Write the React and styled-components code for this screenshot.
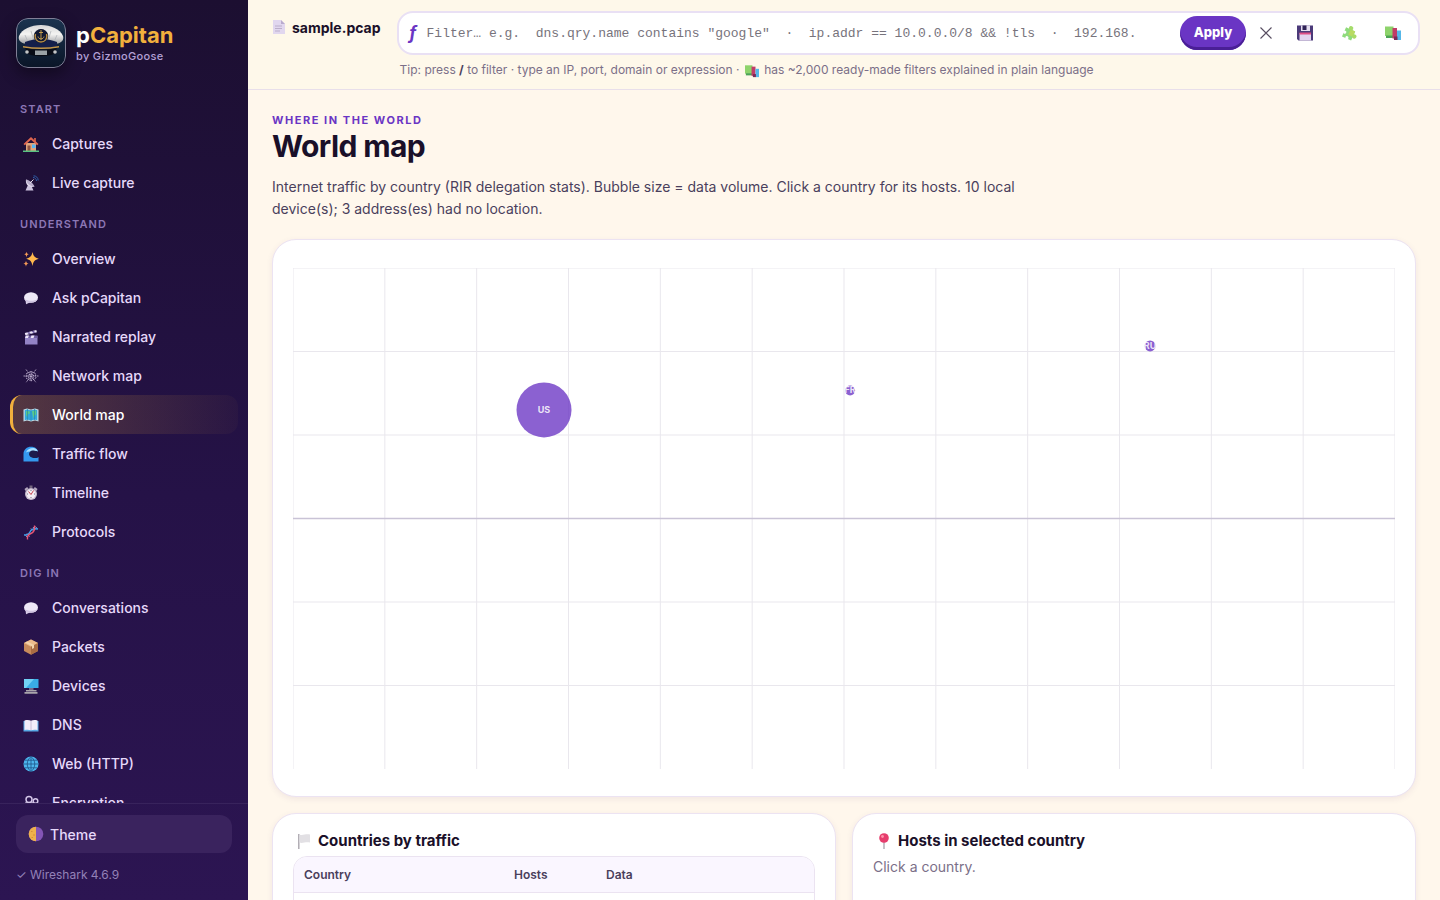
import React, { useState } from 'react';
import styled, { createGlobalStyle } from 'styled-components';

const GlobalStyle = createGlobalStyle`
  * {
    box-sizing: border-box;
  }

  body {
    margin: 0;
    background: #fff7ec;
    color: #1a1029;
    font-family: Inter, 'Liberation Sans', sans-serif;
    font-size: 15px;
  }

  button, input {
    font: inherit;
  }
`;

const Layout = styled.div`
  display: grid;
  grid-template-columns: 248px minmax(0, 1fr);
  height: 100vh;
`;

const Sidebar = styled.aside`
  display: flex;
  flex-direction: column;
  min-height: 0;
  background: linear-gradient(180deg, #1c0f31 0%, #251247 55%, #2c1552 100%);
`;

const Brand = styled.div`
  display: flex;
  align-items: center;
  gap: 10px;
  padding: 18px 16px 16px;
`;

const Logo = styled.svg`
  width: 50px;
  height: 50px;
  border-radius: 12px;
  box-shadow: 0 6px 16px rgba(0, 0, 0, 0.4);
`;

const BrandName = styled.div`
  font-size: 22px;
  font-weight: 700;
  line-height: 26px;
  color: #ffffff;

  span {
    color: #f2b03d;
  }
`;

const BrandBy = styled.div`
  font-size: 11px;
  font-weight: 500;
  line-height: 16px;
  letter-spacing: 0.03em;
  color: #b3a0d6;
`;

const Nav = styled.nav`
  flex: 1;
  min-height: 0;
  overflow: hidden;
  padding: 3px 10px 0;
`;

const NavLabel = styled.div`
  height: 37px;
  padding: 14px 10px 0;
  font-size: 11px;
  font-weight: 600;
  line-height: 16px;
  letter-spacing: 0.1em;
  text-transform: uppercase;
  color: #8c77b5;
`;

const NavItem = styled.a`
  display: flex;
  align-items: center;
  gap: 13px;
  height: 39px;
  padding: 0 10px;
  border-left: 3px solid ${({ $active }) => ($active ? '#f2b03d' : 'transparent')};
  border-radius: 12px;
  background: ${({ $active }) =>
    $active ? 'linear-gradient(90deg, rgba(242, 176, 61, 0.24), rgba(242, 176, 61, 0.03))' : 'none'};
  font-size: 14px;
  font-weight: 500;
  color: ${({ $active }) => ($active ? '#ffffff' : '#e6d9fa')};
  text-decoration: none;
`;

const Glyph = styled.svg`
  flex: none;
  width: 16px;
  height: 16px;
`;

const SideFooter = styled.div`
  padding: 11px 16px 16px;
  border-top: 1px solid #38235c;
`;

const ThemeButton = styled.button`
  display: flex;
  align-items: center;
  gap: 6px;
  width: 100%;
  height: 38px;
  padding: 0 12px;
  border: 0;
  border-radius: 12px;
  background: #3a235e;
  color: #e6d9fa;
  font-size: 14px;
  font-weight: 500;
  cursor: pointer;
`;

const Version = styled.div`
  margin-top: 13px;
  font-family: Inter, 'DejaVu Sans', sans-serif;
  font-size: 12px;
  line-height: 18px;
  color: #9482b8;
`;

const Main = styled.main`
  display: flex;
  flex-direction: column;
  min-width: 0;
  min-height: 0;
`;

const TopBar = styled.header`
  display: flex;
  gap: 16px;
  padding: 11px 20px 10px 24px;
  border-bottom: 1px solid #e8dfea;
  background: #fef8ea;
`;

const FileName = styled.div`
  display: flex;
  align-items: center;
  gap: 4px;
  height: 32px;
  font-size: 14px;
  font-weight: 700;
  white-space: nowrap;
`;

const FilterArea = styled.div`
  flex: 1;
  min-width: 0;
`;

const FilterForm = styled.form`
  display: flex;
  align-items: center;
  gap: 6px;
  height: 44px;
  padding: 0 6px 0 10px;
  border: 2px solid #e9e0f4;
  border-radius: 16px;
  background: #ffffff;
`;

const FilterLabel = styled.label`
  width: 12px;
  font-size: 18px;
  font-weight: 700;
  font-style: italic;
  line-height: 24px;
  color: #6a35c4;
`;

const FilterInput = styled.input`
  flex: 1;
  min-width: 0;
  margin-right: 8px;
  padding: 0;
  border: 0;
  outline: 0;
  background: none;
  font-family: 'Liberation Mono', monospace;
  font-size: 13px;

  &::placeholder {
    color: #77737c;
    opacity: 1;
  }
`;

const ApplyButton = styled.button`
  width: 66px;
  height: 34px;
  padding: 0 0 3px;
  border: 0;
  border-radius: 17px;
  background: #6a35c4;
  box-shadow: inset 0 -3px 0 #4a1f96;
  color: #ffffff;
  font-size: 13px;
  font-weight: 800;
  cursor: pointer;
`;

const IconButton = styled.button`
  display: grid;
  place-items: center;
  width: ${({ $narrow }) => ($narrow ? '28px' : '38px')};
  height: 32px;
  padding: 0;
  border: 0;
  background: none;
  cursor: pointer;
`;

const Tip = styled.p`
  margin: 6px 0 0 3px;
  font-size: 12px;
  line-height: 18px;
  color: #7b6f88;

  b {
    color: #4a3f5c;
  }

  svg {
    width: 14px;
    height: 14px;
    margin: 0 2px;
    vertical-align: middle;
  }
`;

const Content = styled.div`
  flex: 1;
  min-height: 0;
  overflow: hidden auto;
  scrollbar-width: none;
  padding: 22px 24px;
`;

const Eyebrow = styled.div`
  font-size: 11px;
  font-weight: 700;
  line-height: 16px;
  letter-spacing: 0.14em;
  text-transform: uppercase;
  color: #6a35c4;
`;

const Title = styled.h1`
  margin: 0;
  font-size: 30px;
  font-weight: 700;
  line-height: 36px;
  letter-spacing: -0.02em;
`;

const Lead = styled.p`
  max-width: 780px;
  margin: 12px 0 19px;
  font-size: 14px;
  line-height: 22px;
  color: #4a3f5c;
`;

const Card = styled.section`
  padding: ${({ $map }) => ($map ? '28px 20px 27px' : '16px 20px 20px')};
  border: 1px solid #ece3f2;
  border-radius: 24px;
  background: #ffffff;
  box-shadow: 0 2px 6px rgba(80, 40, 120, 0.08);
`;

const MapSvg = styled.svg`
  display: block;
  width: 100%;
  height: auto;
`;

const Columns = styled.div`
  display: grid;
  grid-template-columns: 1fr 1fr;
  gap: 16px;
  margin-top: 16px;
`;

const CardTitle = styled.h2`
  display: flex;
  align-items: center;
  gap: 6px;
  margin: 0 0 4px;
  padding-left: 3px;
  font-size: 15px;
  font-weight: 700;
  line-height: 22px;
`;

const TableFrame = styled.div`
  overflow: hidden;
  border: 1px solid #ebe3f1;
  border-radius: 14px;
`;

const Table = styled.table`
  width: 100%;
  border-collapse: collapse;
  table-layout: fixed;

  th {
    height: 35px;
    padding: 0 10px;
    border-bottom: 1px solid #ebe3f1;
    background: #faf6ff;
    color: #4a3f5c;
    font-size: 12px;
    font-weight: 600;
    text-align: left;
  }

  th:nth-child(1) {
    width: 210px;
  }

  th:nth-child(2) {
    width: 92px;
  }

  td {
    height: 36px;
  }
`;

const Hint = styled.p`
  margin: 0;
  font-size: 14px;
  line-height: 22px;
  color: #7b6f88;
`;

const GLYPHS = {
  house: (
    <>
      <path d="M3 7h10v8H3z" fill="#dfa47c" />
      <path d="M11 2h2v4h-2z" fill="#b95548" />
      <path d="M8 1 .5 8l1.3 1.2L8 3.8l6.2 5.4L15.5 8z" fill="#e0664f" />
      <path d="M4.5 9.5h3V15h-3z" fill="#8e5544" />
      <path d="M9 8.5h3.5v3.5H9z" fill="#55b6f5" />
      <path d="M0 14.5h16V16H0z" fill="#59c383" />
    </>
  ),
  dish: (
    <>
      <path d="m5 10-2.5 5.5h8L8 10z" fill="#cdc3df" />
      <path d="M3 4.500C2 10 6.500 13 11.500 11.500z" fill="#e3dbee" />
      <path d="M3 4.500c3 .2 7 3.500 8.500 7C8 11.500 3.500 9 3 4.500z" fill="#b9aecb" />
      <path d="m7 8 3.500-3.500" stroke="#e6e0f0" />
      <path d="M10 2.500c2 0 3.500 1.500 3.500 3.500M10.500.8c2.600 0 4.700 2 4.700 4.700" stroke="#2f5ea8" fill="none" />
    </>
  ),
  sparkles: (
    <>
      <path d="M9.500 1c.8 4 2.200 5.800 6.300 6.800-4.100 1-5.500 2.800-6.300 7.200-.8-4.400-2.200-6.200-6.300-7.200 4.100-1 5.500-2.800 6.300-6.800z" fill="#ffb84d" />
      <path d="M3.500.8c.4 1.700.9 2.200 2.400 2.500-1.500.3-2 1-2.400 2.900-.4-1.900-.9-2.600-2.400-2.900 1.500-.3 2-.8 2.400-2.500zM3 9.800c.4 1.900 1 2.500 2.700 2.800-1.700.4-2.300 1-2.700 3.100-.4-2.100-1-2.700-2.700-3.100 1.700-.3 2.300-.9 2.700-2.800z" fill="#f69b57" />
    </>
  ),
  bubble: (
    <>
      <ellipse cx="8" cy="7.500" rx="7" ry="5.200" fill="#eee9f7" />
      <path d="M2.500 10 3 14.200 8 12z" fill="#d6cbe6" />
      <path d="M1.300 9c1.700 4.400 11.700 4.800 13.500 0-3 2.300-10 2.500-13.500 0z" fill="#cfc3e1" />
    </>
  ),
  clapper: (
    <>
      <path d="M2 7h12.500v8.500H2z" fill="#9383c5" />
      <path d="m1.800 4 11.500-3 .6 2.200-11.500 3z" fill="#eee6fa" />
      <path d="m4 3.500 2 1.700 2-.5-1.900-1.700zm4.500-1.200 2 1.700 2-.5-1.900-1.700z" fill="#6e5c9f" />
      <path d="M2 6.500h12.500V9H2z" fill="#6e5c9f" />
      <path d="M3 6.500h3L5 9H2zm5.500 0h3l-1 2.500h-3z" fill="#eee6fa" />
    </>
  ),
  web: (
    <g fill="none" stroke="#cfc2e0" strokeWidth=".8" strokeDasharray="1.800 .9">
      <path d="M.5 8h15M3 1.500l10 13M13 1.500l-10 13M8 3v10M3.500 5.500 8 3.500l4.500 2L13 10l-5 3-5-3zM5.500 7 8 5.500 10.500 7v2.500L8 11 5.500 9.500z" />
    </g>
  ),
  map: (
    <>
      <path d="m.5 2.500 3.500-1 4 1 4-1 3.500 1v12l-3.500-1-4 1-4-1-3.500 1z" fill="#bedbe5" />
      <path d="m1.800 3.200 2.400-.7 3.800 1 3.800-1 2.400.7v10l-2.400-.7-3.800 1-3.800-1-2.400.7z" fill="#32a8dd" />
      <path d="m3 4 3.500.3.500 2-2 1-.3 3.500L3 8zm6 0 4-.5.3 4-1.800 1-.8 3-1-3z" fill="#59c98b" />
      <path d="M4.500 2v11M8 3v11M11.500 2v11" stroke="#227da9" strokeWidth=".6" />
    </>
  ),
  wave: (
    <>
      <path d="M.5 15.500V8C.5 3.500 4 .8 8 .8c4.200 0 6.500 2.200 7 5-2-.9-4-.4-4.500 1.100-.6 2 .8 3.900 5 4.100v4.500z" fill="#3498ee" />
      <path d="M3 6.500C4 3.500 7 1.800 11 2c2.400.6 3.700 2.300 4 3.800-1.300-1-2-.5-3-.8-1 .8-2 .2-2.700 1.300C7 5 5 5.300 3 6.500z" fill="#a8e0ff" />
      <path d="M6 8c.3-2.500 2-3.800 4.500-3.500 1.800.2 3 1 4.500 1-1.500.5-1 2-.5 2.500-1 1.500 0 3 1 3.500-5.500 1.500-9.500-.4-9.500-3.500z" fill="#1c1c4c" />
    </>
  ),
  clock: (
    <>
      <path d="M6.500.5h3V3h-3z" fill="#74677f" />
      <path d="m1.500 4 2.700-2 1 1.500L2.500 6zm13 0-2.700-2-1 1.500L13.500 6z" fill="#b5a9bf" />
      <circle cx="8" cy="9" r="6" fill="#cbbfd1" />
      <circle cx="8" cy="9" r="4.600" fill="#f4eef5" />
      <path d="m5.500 6.500 2.500 3 2.500-4" stroke="#c6424d" fill="none" />
      <path d="M8 5v1M8 12v1M4 9h1M11 9h1" stroke="#5d5069" strokeWidth=".8" />
    </>
  ),
  dna: (
    <g fill="none" strokeWidth="1.400">
      <path d="m4 13-1.500-2m4 1.500L4 9.500m6-3L8 4.500m4 1-2-2.500m4 1.500-1.500-2" stroke="#bfa3df" strokeWidth=".9" />
      <path d="M1 11c3 0 5-.5 6-3s3-4 8-3" stroke="#3ca4ed" />
      <path d="M4.500 15.500c-.5-3 .5-5 3.500-6s4-3.500 3.500-8" stroke="#e85775" />
    </g>
  ),
  box: (
    <>
      <path d="M8 .5 15 4v8l-7 3.800L1 12V4z" fill="#c78a5b" />
      <path d="M8 .5 15 4 8 7.700 1 4z" fill="#edbb8c" />
      <path d="M8 7.700 15 4v8l-7 3.800z" fill="#a96c43" />
      <path d="m4 2.500 7 3.600V9l-2 1V7.200L2.300 3.500z" fill="#f3d4ab" />
    </>
  ),
  monitor: (
    <>
      <path d="M1 1h14.500v9H1z" fill="#39ade6" />
      <path d="m1 1 10 0L3 10H1z" fill="#72d2f5" />
      <path d="M6 10h4.500v2H6z" fill="#766a89" />
      <path d="M3 12h10.500v1.500H3zM1.500 14h13v1.800h-13z" fill="#a9a5ab" />
    </>
  ),
  book: (
    <>
      <path d="M.5 4h15v10.500H.5z" fill="#58a9e6" />
      <path d="M1.500 3.500c2.500-.7 5-.5 6.500.3 1.500-.8 4-1 6.500-.3V13c-2.500-.6-5-.4-6.500.3-1.500-.7-4-.9-6.500-.3z" fill="#f2edf9" />
      <path d="M8 4v9" stroke="#bcb0cd" strokeWidth=".8" />
    </>
  ),
  globe: (
    <>
      <circle cx="8" cy="8" r="7.500" fill="#4db6ed" />
      <path d="M8 .5v15M.5 8h15M2 4.200h12M2 11.800h12M8 .5c-5 4-5 11 0 15M8 .5c5 4 5 11 0 15" fill="none" stroke="#205489" strokeWidth=".8" />
    </>
  ),
  key: (
    <g fill="none" stroke="#d3c5e8" strokeWidth="1.500">
      <circle cx="6" cy="4.500" r="3" />
      <circle cx="12.500" cy="6" r="2.300" />
      <path d="M3 8h7v6H3z" />
    </g>
  ),
  theme: (
    <>
      <circle cx="8" cy="8" r="7.300" fill="#8355b5" />
      <path d="M8 .7a7.300 7.300 0 0 0 0 14.600z" fill="#efb14b" />
      <path d="M3 5.500h1.500M5 9h2M3.500 11.500H5" stroke="#d98c3a" />
    </>
  ),
  page: (
    <>
      <path d="M1 1h8l4 4v10H1z" fill="#e1d7ef" />
      <path d="M9 1v4h4z" fill="#b9abce" />
      <path d="M3 7h7M3 9.500h7M3 12h5" stroke="#bbaecb" />
    </>
  ),
  close: <path d="m2.500 2.500 11 11M13.500 2.500l-11 11" stroke="#574d61" fill="none" strokeWidth="1.100" />,
  floppy: (
    <>
      <path d="M0 .5h16v15H1.500L0 14z" fill="#4b3a79" />
      <path d="M4 .5h9V6H4z" fill="#e6dff0" />
      <path d="M5.500.5h4V5h-4z" fill="#302357" />
      <path d="M2.500 8h11.500v7.500H2.500z" fill="#e2d3ef" />
      <path d="M2.500 7.500h11.500v2H2.500z" fill="#df4f87" />
    </>
  ),
  puzzle: (
    <g transform="rotate(24 8 8)">
      <path d="M3 4h10v10H3z" fill="#8fdb7c" />
      <path d="M8 4h5v6H8z" fill="#b9da62" />
      <circle cx="8" cy="2.800" r="2.200" fill="#a5dc6c" />
      <circle cx="14.200" cy="9" r="2.200" fill="#a9da66" />
      <circle cx="3.800" cy="9" r="1.600" fill="#ffffff" />
      <circle cx="8" cy="13.200" r="1.600" fill="#ffffff" />
    </g>
  ),
  books: (
    <>
      <path d="M0 1.500h8.500V11H0z" fill="#8dd36b" />
      <path d="M1 10.500h7.500V13H1z" fill="#4ca455" />
      <path d="M7.500 3h4.500v10.500H7.500z" fill="#c13c68" />
      <path d="M12 5.500h4v9.500h-4z" fill="#55b7e8" />
      <path d="M9 11.500h3.500V15H9z" fill="#7b2b57" />
    </>
  ),
  flag: (
    <>
      <path d="M2.800 1v15" stroke="#aaa6ad" strokeWidth="1.400" />
      <path d="M3.500 1.500c3 1.500 6-1 10.500 0v8c-4-1.200-7.500 1.300-10.500 0z" fill="#e2e0e4" />
    </>
  ),
  pin: (
    <>
      <path d="M8 9v7" stroke="#9f9aa5" strokeWidth="1.200" />
      <circle cx="8" cy="5" r="4.800" fill="#e63d6d" />
      <circle cx="6.500" cy="3.500" r="1.400" fill="#ff92ab" />
    </>
  ),
};

const Emoji = ({ name }) => (
  <Glyph viewBox="0 0 16 16" aria-hidden="true">{GLYPHS[name]}</Glyph>
);

const CaptainLogo = () => (
  <Logo viewBox="0 0 50 50" aria-hidden="true">
    <defs>
      <linearGradient id="logoBg" x1="0" y1="0" x2="0" y2="1">
        <stop offset="0" stopColor="#1b3450" />
        <stop offset="1" stopColor="#0a1527" />
      </linearGradient>
      <linearGradient id="capTop" x1="0" y1="0" x2="0" y2="1">
        <stop offset="0" stopColor="#d6d7d8" />
        <stop offset="0.5" stopColor="#f4f4f2" />
        <stop offset="1" stopColor="#a3a5a8" />
      </linearGradient>
    </defs>
    <rect width="50" height="50" rx="12" fill="url(#logoBg)" />
    <path d="M3 18C6 11 15 7 25 7s19 4 22 11c1 4-1 6-5 7.500H8C4 24 2 22 3 18z" fill="url(#capTop)" />
    <path d="m9 17 3 7M15 13l3 10M41 17l-3 7M35 13l-3 10" stroke="#b3b6ba" strokeWidth=".8" />
    <path d="M9 24c10-4 22-4 32 0v5c-10 2-22 2-32 0z" fill="#141f4a" />
    <path d="M7 28c12 2 24 2 36 0v1.600c-12 2-24 2-36 0z" fill="#c29548" />
    <path d="M9 30c10 2 22 2 32 0l-3 6c-8 3-18 3-26 0z" fill="#090c16" />
    <path d="M19 32.500h12V37H19z" fill="#9ba2a6" />
    <circle cx="11" cy="34" r="1.800" fill="#c4c6c7" />
    <circle cx="39" cy="34" r="1.800" fill="#c4c6c7" />
    <path d="M18 16c1-3 4-5 7-5s6 2 7 5c1 5-2 9-7 9s-8-4-7-9z" fill="#101831" />
    <path d="M19.500 16c-1.500 5 2 8 5.500 8s7-3 5.500-8" fill="none" stroke="#b58c43" strokeWidth="1.400" />
    <path d="M25 12v10M23 14.500h4M22 18.500c.6 3.200 5.400 3.200 6 0" fill="none" stroke="#d0a650" strokeWidth=".9" />
    <rect x=".5" y=".5" width="49" height="49" rx="11.500" fill="none" stroke="#817f96" />
  </Logo>
);

const SECTIONS = [
  {
    label: 'Start',
    items: [
      ['house', 'Captures'],
      ['dish', 'Live capture'],
    ],
  },
  {
    label: 'Understand',
    items: [
      ['sparkles', 'Overview'],
      ['bubble', 'Ask pCapitan'],
      ['clapper', 'Narrated replay'],
      ['web', 'Network map'],
      ['map', 'World map'],
      ['wave', 'Traffic flow'],
      ['clock', 'Timeline'],
      ['dna', 'Protocols'],
    ],
  },
  {
    label: 'Dig in',
    items: [
      ['bubble', 'Conversations'],
      ['box', 'Packets'],
      ['monitor', 'Devices'],
      ['book', 'DNS'],
      ['globe', 'Web (HTTP)'],
      ['key', 'Encryption'],
    ],
  },
];

const MAP_W = 1102;
const MAP_H = 501;

const COUNTRIES = [
  { code: 'US', lon: -98, lat: 39, r: 27.5 },
  { code: 'FR', lon: 2, lat: 46, r: 5 },
  { code: 'RU', lon: 100, lat: 62, r: 5.5 },
];

const toX = (lon) => ((lon + 180) / 360) * MAP_W;
const toY = (lat) => ((90 - lat) / 180) * MAP_H;

const WorldMap = () => {
  const meridians = Array.from({ length: 13 }, (_, i) => -180 + i * 30);
  const parallels = [90, 60, 30, -30, -60];

  return (
    <MapSvg viewBox={`0 0 ${MAP_W} ${MAP_H}`} role="img" aria-label="World map">
      <g stroke="#e9e7ed">
        {meridians.map((lon) => (
          <line key={lon} x1={toX(lon)} x2={toX(lon)} y1="0" y2={MAP_H} />
        ))}
        {parallels.map((lat) => (
          <line key={lat} x1="0" x2={MAP_W} y1={toY(lat)} y2={toY(lat)} />
        ))}
      </g>
      <line x1="0" x2={MAP_W} y1={toY(0)} y2={toY(0)} stroke="#c9c3d6" strokeWidth="1.5" />
      {COUNTRIES.map((c) => (
        <g key={c.code}>
          <circle cx={toX(c.lon)} cy={toY(c.lat)} r={c.r} fill="#6a35c4" fillOpacity="0.78" />
          <text
            x={toX(c.lon)}
            y={toY(c.lat) + 3}
            textAnchor="middle"
            fontSize="9"
            fontWeight="700"
            fill="#ffffff"
            fillOpacity="0.85"
          >
            {c.code}
          </text>
        </g>
      ))}
    </MapSvg>
  );
};

const App = () => {
  const [filter, setFilter] = useState('');

  return (
    <>
      <GlobalStyle />
      <Layout>
        <Sidebar>
          <Brand>
            <CaptainLogo />
            <div>
              <BrandName>p<span>Capitan</span></BrandName>
              <BrandBy>by GizmoGoose</BrandBy>
            </div>
          </Brand>

          <Nav>
            {SECTIONS.map((section) => (
              <div key={section.label}>
                <NavLabel>{section.label}</NavLabel>
                {section.items.map(([icon, text]) => (
                  <NavItem key={text} href="#" $active={text === 'World map'}>
                    <Emoji name={icon} />
                    {text}
                  </NavItem>
                ))}
              </div>
            ))}
          </Nav>

          <SideFooter>
            <ThemeButton type="button">
              <Emoji name="theme" />
              Theme
            </ThemeButton>
            <Version>✓ Wireshark 4.6.9</Version>
          </SideFooter>
        </Sidebar>

        <Main>
          <TopBar>
            <FileName>
              <Emoji name="page" />
              sample.pcap
            </FileName>
            <FilterArea>
              <FilterForm onSubmit={(e) => e.preventDefault()}>
                <FilterLabel htmlFor="filter">ƒ</FilterLabel>
                <FilterInput
                  id="filter"
                  value={filter}
                  onChange={(e) => setFilter(e.target.value)}
                  placeholder={'Filter… e.g.  dns.qry.name contains "google"  ·  ip.addr == 10.0.0.0/8 && !tls  ·  192.168.'}
                />
                <ApplyButton type="submit">Apply</ApplyButton>
                <IconButton type="button" $narrow aria-label="Clear" onClick={() => setFilter('')}>
                  <Emoji name="close" />
                </IconButton>
                <IconButton type="button" aria-label="Save"><Emoji name="floppy" /></IconButton>
                <IconButton type="button" aria-label="Builder"><Emoji name="puzzle" /></IconButton>
                <IconButton type="button" aria-label="Library"><Emoji name="books" /></IconButton>
              </FilterForm>
              <Tip>
                Tip: press <b>/</b> to filter · type an IP, port, domain or expression ·{' '}
                <Emoji name="books" />
                {' '}has ~2,000 ready-made filters explained in plain language
              </Tip>
            </FilterArea>
          </TopBar>

          <Content>
            <Eyebrow>Where in the world</Eyebrow>
            <Title>World map</Title>
            <Lead>
              Internet traffic by country (RIR delegation stats). Bubble size = data volume. Click a
              country for its hosts. 10 local device(s); 3 address(es) had no location.
            </Lead>

            <Card $map>
              <WorldMap />
            </Card>

            <Columns>
              <Card>
                <CardTitle><Emoji name="flag" />Countries by traffic</CardTitle>
                <TableFrame>
                  <Table>
                    <thead>
                      <tr>
                        <th>Country</th>
                        <th>Hosts</th>
                        <th>Data</th>
                      </tr>
                    </thead>
                    <tbody>
                      <tr>
                        <td colSpan={3} />
                      </tr>
                    </tbody>
                  </Table>
                </TableFrame>
              </Card>
              <Card>
                <CardTitle><Emoji name="pin" />Hosts in selected country</CardTitle>
                <Hint>Click a country.</Hint>
              </Card>
            </Columns>
          </Content>
        </Main>
      </Layout>
    </>
  );
};

export default App;
